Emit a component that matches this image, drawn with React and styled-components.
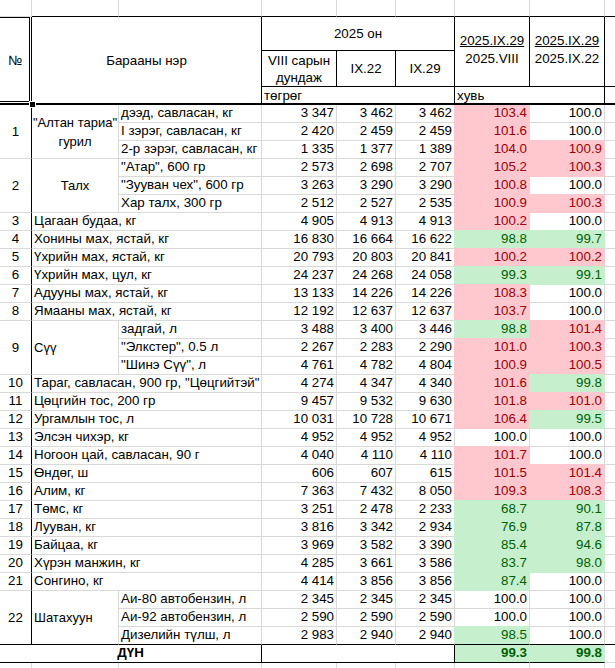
import React from "react";
import styled, { createGlobalStyle } from "styled-components";

const GRID = "#d9d9d9";
const BLACK = "#000";
const RED_BG = "#ffc7ce";
const RED_FG = "#9c0006";
const GREEN_BG = "#c6efce";
const GREEN_FG = "#006100";

const FILL = {
  r: { bg: RED_BG, fg: RED_FG },
  g: { bg: GREEN_BG, fg: GREEN_FG },
};

const Global = createGlobalStyle`
  html, body { margin: 0; padding: 0; background: #fff; overflow: hidden; }
  body { font-family: "Liberation Sans", Arial, sans-serif; }
`;

const Sheet = styled.table`
  border-collapse: separate;
  border-spacing: 0;
  table-layout: fixed;
  width: 645px;
  font-family: "Liberation Sans", Arial, sans-serif;
  font-size: 13.33px;
  line-height: 15px;
  color: #000;
`;

const Row = styled.tr`
  height: ${(p) => p.$h || 18}px;
`;

const Cell = styled.td`
  box-sizing: border-box;
  padding: ${(p) => p.$pad || "0 2px 2px"};
  border-right: 1px solid ${(p) => p.$r || GRID};
  border-bottom: ${(p) => p.$bw || 1}px solid ${(p) => p.$b || GRID};
  text-align: ${(p) => p.$align || "left"};
  vertical-align: ${(p) => p.$v || "bottom"};
  white-space: nowrap;
  overflow: hidden;
  background: ${(p) => p.$bg || "transparent"};
  color: ${(p) => p.$fg || "#000"};
  font-weight: ${(p) => (p.$bold ? 700 : 400)};
  line-height: ${(p) => p.$lh || 15}px;
  box-shadow: ${(p) => p.$shadow || "none"};
`;

const GroupName = styled(Cell)`
  overflow: visible;
  font-size: 13px;
  padding: ${(p) => (p.$align === "center" ? "0" : "0 2px")};
`;

const NumHead = styled(Cell)`
  position: relative;
  overflow: visible;
`;

const SelectFrame = styled.span`
  position: absolute;
  left: -2px;
  top: 0;
  right: 1px;
  bottom: 1px;
  border: 1px solid #000;
  pointer-events: none;
`;

const FillHandle = styled.span`
  position: absolute;
  right: -4px;
  bottom: -4px;
  width: 5px;
  height: 5px;
  box-sizing: border-box;
  background: #000;
  outline: 1px solid #fff;
  z-index: 3;
`;

const Under = styled.span`
  text-decoration: underline;
`;

const groups = [
  {
    n: 1,
    name: ['"Алтан тариа"', "гурил"],
    align: "center",
    subs: [
      ["дээд, савласан, кг", "3 347", "3 462", "3 462", ["103.4", "r"], ["100.0"]],
      ["I зэрэг, савласан, кг", "2 420", "2 459", "2 459", ["101.6", "r"], ["100.0"]],
      ["2-р зэрэг, савласан, кг", "1 335", "1 377", "1 389", ["104.0", "r"], ["100.9", "r"]],
    ],
  },
  {
    n: 2,
    name: ["Талх"],
    align: "center",
    subs: [
      ['"Атар", 600 гр', "2 573", "2 698", "2 707", ["105.2", "r"], ["100.3", "r"]],
      ['"Зууван чех", 600 гр', "3 263", "3 290", "3 290", ["100.8", "r"], ["100.0"]],
      ["Хар талх, 300 гр", "2 512", "2 527", "2 535", ["100.9", "r"], ["100.3", "r"]],
    ],
  },
  { n: 3, label: "Цагаан будаа, кг", v: ["4 905", "4 913", "4 913"], g: ["100.2", "r"], h: ["100.0"] },
  { n: 4, label: "Хонины мах, ястай, кг", v: ["16 830", "16 664", "16 622"], g: ["98.8", "g"], h: ["99.7", "g"] },
  { n: 5, label: "Үхрийн мах, ястай, кг", v: ["20 793", "20 803", "20 841"], g: ["100.2", "r"], h: ["100.2", "r"] },
  { n: 6, label: "Үхрийн мах, цул, кг", v: ["24 237", "24 268", "24 058"], g: ["99.3", "g"], h: ["99.1", "g"] },
  { n: 7, label: "Адууны мах, ястай, кг", v: ["13 133", "14 226", "14 226"], g: ["108.3", "r"], h: ["100.0"] },
  { n: 8, label: "Ямааны мах, ястай, кг", v: ["12 192", "12 637", "12 637"], g: ["103.7", "r"], h: ["100.0"] },
  {
    n: 9,
    name: ["Сүү"],
    align: "left",
    subs: [
      ["задгай, л", "3 488", "3 400", "3 446", ["98.8", "g"], ["101.4", "r"]],
      ['"Элкстер", 0.5 л', "2 267", "2 283", "2 290", ["101.0", "r"], ["100.3", "r"]],
      ['"Шинэ Сүү", л', "4 761", "4 782", "4 804", ["100.9", "r"], ["100.5", "r"]],
    ],
  },
  { n: 10, label: 'Тараг, савласан, 900 гр, "Цөцгийтэй"', v: ["4 274", "4 347", "4 340"], g: ["101.6", "r"], h: ["99.8", "g"] },
  { n: 11, label: "Цөцгийн тос, 200 гр", v: ["9 457", "9 532", "9 630"], g: ["101.8", "r"], h: ["101.0", "r"] },
  { n: 12, label: "Ургамлын тос, л", v: ["10 031", "10 728", "10 671"], g: ["106.4", "r"], h: ["99.5", "g"] },
  { n: 13, label: "Элсэн чихэр, кг", v: ["4 952", "4 952", "4 952"], g: ["100.0"], h: ["100.0"] },
  { n: 14, label: "Ногоон цай, савласан, 90 г", v: ["4 040", "4 110", "4 110"], g: ["101.7", "r"], h: ["100.0"] },
  { n: 15, label: "Өндөг, ш", v: ["606", "607", "615"], g: ["101.5", "r"], h: ["101.4", "r"] },
  { n: 16, label: "Алим, кг", v: ["7 363", "7 432", "8 050"], g: ["109.3", "r"], h: ["108.3", "r"] },
  { n: 17, label: "Төмс, кг", v: ["3 251", "2 478", "2 233"], g: ["68.7", "g"], h: ["90.1", "g"] },
  { n: 18, label: "Лууван, кг", v: ["3 816", "3 342", "2 934"], g: ["76.9", "g"], h: ["87.8", "g"] },
  { n: 19, label: "Байцаа, кг", v: ["3 969", "3 582", "3 390"], g: ["85.4", "g"], h: ["94.6", "g"] },
  { n: 20, label: "Хүрэн манжин, кг", v: ["4 285", "3 661", "3 586"], g: ["83.7", "g"], h: ["98.0", "g"] },
  { n: 21, label: "Сонгино, кг", v: ["4 414", "3 856", "3 856"], g: ["87.4", "g"], h: ["100.0"] },
  {
    n: 22,
    name: ["Шатахуун"],
    align: "left",
    subs: [
      ["Аи-80 автобензин, л", "2 345", "2 345", "2 345", ["100.0"], ["100.0"]],
      ["Аи-92 автобензин, л", "2 590", "2 590", "2 590", ["100.0"], ["100.0"]],
      ["Дизелийн түлш, л", "2 983", "2 940", "2 940", ["98.5", "g"], ["100.0"]],
    ],
  },
];

/* flatten into rows */
const rows = [];
groups.forEach((g, gi) => {
  const lastGroup = gi === groups.length - 1;
  if (g.subs) {
    g.subs.forEach((s, si) => {
      rows.push({
        group: si === 0 ? g : null,
        label: s[0],
        v: [s[1], s[2], s[3]],
        g: s[4],
        h: s[5],
        last: lastGroup && si === g.subs.length - 1,
        groupLast: lastGroup,
      });
    });
  } else {
    rows.push({ single: g, label: g.label, v: g.v, g: g.g, h: g.h, last: false });
  }
});

function PctCell({ val, first, last, nextFill }) {
  const [text, c] = val;
  const f = c ? FILL[c] : null;
  const shadow = f ? (first ? `-1px 0 0 0 ${f.bg}` : `-1px -1px 0 0 ${f.bg}`) : "none";
  return (
    <Cell
      $align="right"
      $bg={f ? f.bg : undefined}
      $fg={f ? f.fg : undefined}
      $r={f ? f.bg : nextFill || GRID}
      $b={last ? BLACK : f ? f.bg : GRID}
      $shadow={shadow}
    >
      {text}
    </Cell>
  );
}

function DataRow({ row, index }) {
  const first = index === 0;
  const bottom = row.last ? BLACK : GRID;
  const hFill = row.h[1] ? FILL[row.h[1]].bg : null;
  const gFill = row.g[1] ? FILL[row.g[1]].bg : null;
  return (
    <Row>
      {row.group && (
        <>
          <Cell rowSpan={3} $align="center" $v="middle" $r={BLACK} $b={row.groupLast ? BLACK : GRID} $pad="0 2px">
            {row.group.n}
          </Cell>
          <GroupName
            rowSpan={3}
            $align={row.group.align}
            $v="middle"
            $lh={19}
            $b={row.groupLast ? BLACK : GRID}
          >
            {row.group.name.map((t, i) => (
              <React.Fragment key={i}>
                {i > 0 && <br />}
                {t}
              </React.Fragment>
            ))}
          </GroupName>
        </>
      )}
      {row.single && (
        <>
          <Cell $align="center" $r={BLACK} $b={bottom}>
            {row.single.n}
          </Cell>
          <Cell colSpan={2} $b={bottom}>
            {row.label}
          </Cell>
        </>
      )}
      {!row.single && <Cell $b={bottom}>{row.label}</Cell>}
      <Cell $align="right" $b={bottom}>{row.v[0]}</Cell>
      <Cell $align="right" $b={bottom}>{row.v[1]}</Cell>
      <Cell $align="right" $b={bottom} $r={gFill || GRID}>{row.v[2]}</Cell>
      <PctCell val={row.g} first={first} last={row.last} nextFill={hFill} />
      <PctCell val={row.h} first={first} last={row.last} />
      <Cell $b={bottom} />
    </Row>
  );
}

export default function App() {
  return (
    <>
      <Global />
      <Sheet>
        <colgroup>
          <col style={{ width: 32 }} />
          <col style={{ width: 87 }} />
          <col style={{ width: 143 }} />
          <col style={{ width: 75 }} />
          <col style={{ width: 59 }} />
          <col style={{ width: 59 }} />
          <col style={{ width: 75 }} />
          <col style={{ width: 75 }} />
          <col style={{ width: 40 }} />
        </colgroup>
        <tbody>
          <Row $h={17}>
            <Cell />
            <Cell $b={BLACK} />
            <Cell $b={BLACK} />
            <Cell $b={BLACK} />
            <Cell $b={BLACK} />
            <Cell $b={BLACK} />
            <Cell $b={BLACK} />
            <Cell $b={BLACK} />
            <Cell $b={BLACK} />
          </Row>
          <Row $h={34}>
            <NumHead rowSpan={3} $align="center" $v="middle" $r={BLACK} $b={BLACK} $bw={2} $pad="0">
              №
              <SelectFrame />
              <FillHandle />
            </NumHead>
            <Cell colSpan={2} rowSpan={3} $align="center" $v="middle" $r={BLACK} $b={BLACK} $bw={2} $pad="0">
              Барааны нэр
            </Cell>
            <Cell colSpan={3} $align="center" $v="middle" $r={BLACK} $b={BLACK} $pad="0">
              2025 он
            </Cell>
            <Cell rowSpan={2} $align="center" $v="middle" $r={BLACK} $b={BLACK} $lh={18} $pad="0 0 4px">
              <Under>2025.IX.29</Under>
              <br />
              2025.VIII
            </Cell>
            <Cell rowSpan={2} $align="center" $v="middle" $r={BLACK} $b={BLACK} $lh={18} $pad="0 0 4px">
              <Under>2025.IX.29</Under>
              <br />
              2025.IX.22
            </Cell>
            <Cell rowSpan={2} $b={BLACK} />
          </Row>
          <Row $h={36}>
            <Cell $align="center" $v="middle" $r={BLACK} $b={BLACK} $lh={17} $pad="1px 0 0">
              VIII сарын
              <br />
              дундаж
            </Cell>
            <Cell $align="center" $v="middle" $r={BLACK} $b={BLACK} $pad="0">
              IX.22
            </Cell>
            <Cell $align="center" $v="middle" $r={BLACK} $b={BLACK} $pad="0">
              IX.29
            </Cell>
          </Row>
          <Row $h={18}>
            <Cell colSpan={3} $r={BLACK} $b={BLACK} $bw={2} $pad="0 2px">
              төгрөг
            </Cell>
            <Cell colSpan={2} $r={BLACK} $b={BLACK} $bw={2} $pad="0 2px">
              хувь
            </Cell>
            <Cell $b={BLACK} $bw={2} />
          </Row>
          {rows.map((r, i) => (
            <DataRow key={i} row={r} index={i} />
          ))}
          <Row $h={18}>
            <Cell colSpan={3} $align="center" $bold $r={BLACK} $b={BLACK}>
              ДҮН
            </Cell>
            <Cell colSpan={3} $r={BLACK} $b={BLACK} />
            <Cell $align="right" $bold $bg={GREEN_BG} $fg={GREEN_FG} $r={GREEN_BG} $b={BLACK}>
              99.3
            </Cell>
            <Cell $align="right" $bold $bg={GREEN_BG} $fg={GREEN_FG} $r={GREEN_BG} $b={BLACK}>
              99.8
            </Cell>
            <Cell />
          </Row>
          <Row $h={18}>
            <Cell />
            <Cell />
            <Cell />
            <Cell />
            <Cell />
            <Cell />
            <Cell />
            <Cell />
            <Cell />
          </Row>
        </tbody>
      </Sheet>
    </>
  );
}
